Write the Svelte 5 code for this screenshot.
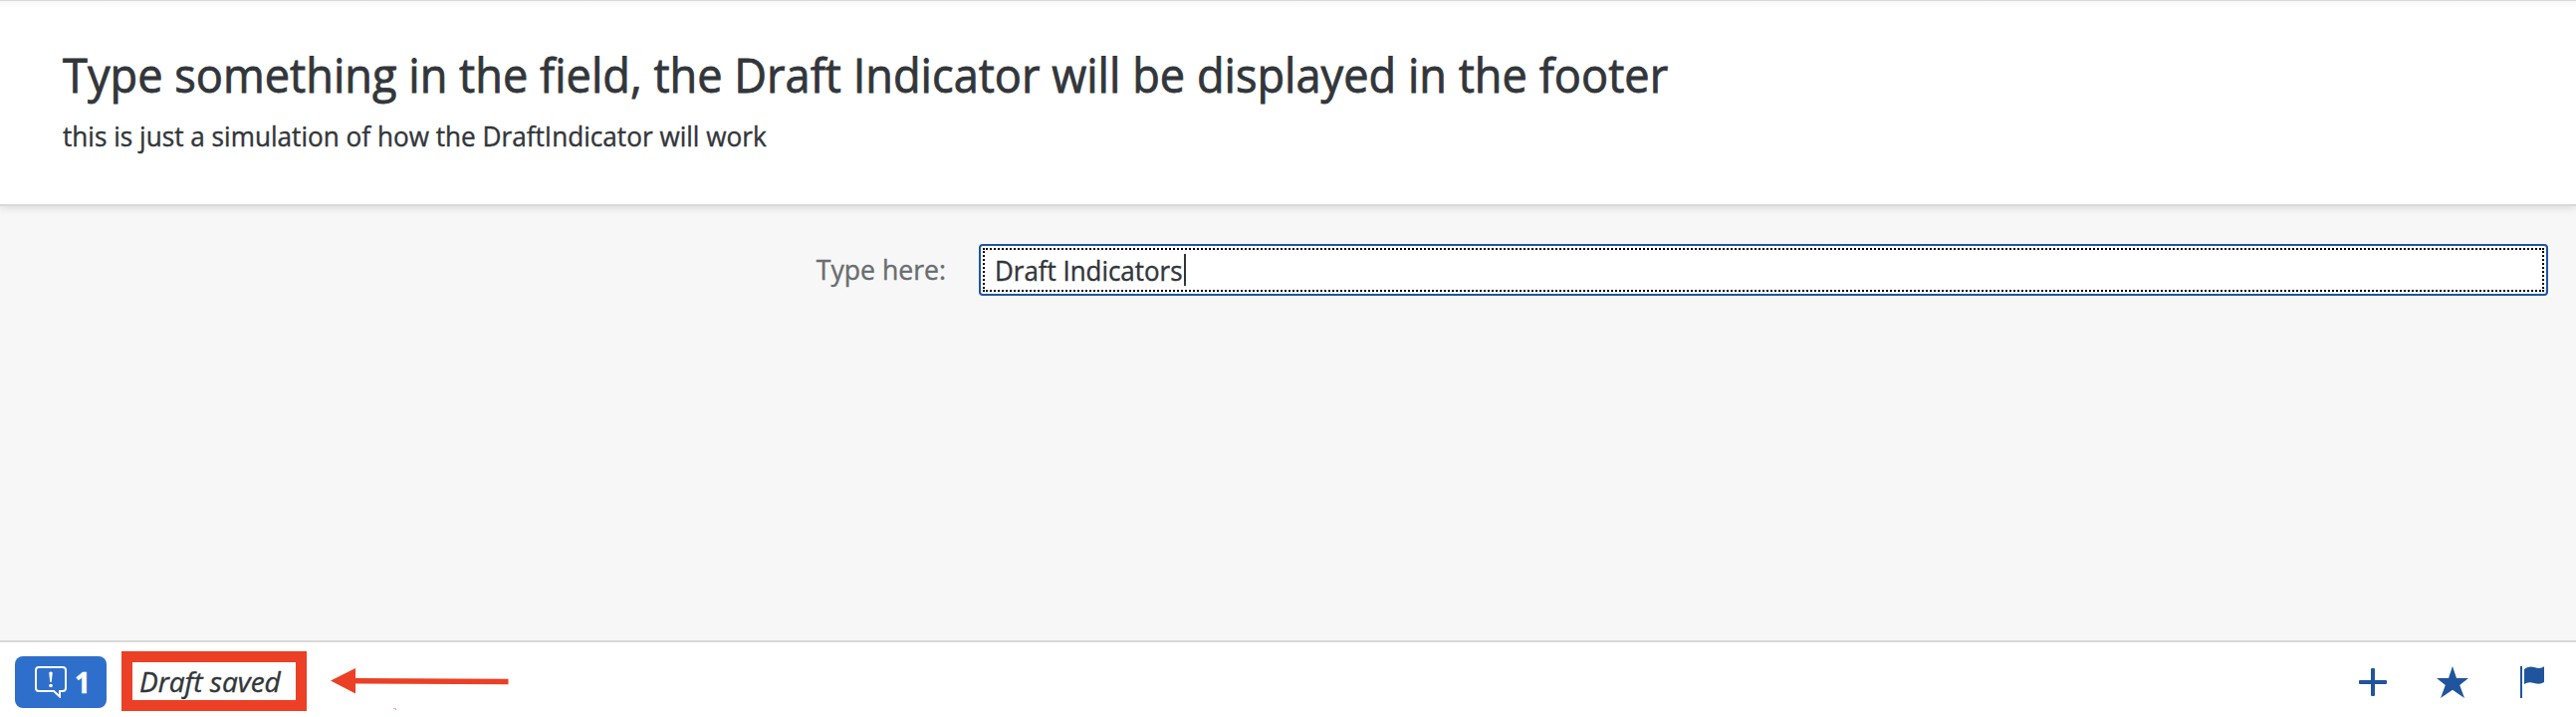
<script>
  let value = 'Draft Indicators';
</script>

<div class="page">
  <header>
    <h1><span>Type something in the field, the Draft Indicator will be displayed in the footer</span></h1>
    <p><span>this is just a simulation of how the DraftIndicator will work</span></p>
  </header>
  <main>
    <div class="label"><span>Type here:</span></div>
    <div class="field"><div class="focus"><div class="entry"><span class="value">{value}</span></div><i class="caret"></i></div></div>
  </main>
  <footer>
    <div class="messages">
      <svg width="32" height="32" viewBox="0 0 32 32" fill="none" stroke="#fff" stroke-width="2">
        <path d="M4 1H28Q31 1 31 4V22Q31 25 28 25H25V30.5L19 25H4Q1 25 1 22V4Q1 1 4 1Z" />
        <path d="M14.2 6.5Q16 4.5 17.8 6.5L16.7 16H15.3Z" fill="#fff" stroke="none" />
        <circle cx="16" cy="19.5" r="1.8" fill="#fff" stroke="none" />
      </svg>
      <b>1</b>
    </div>
    <div class="draft"><span>Draft saved</span></div>
    <svg class="arrow" width="180" height="50" viewBox="0 0 180 50" fill="#eb4026">
      <path d="M0 19.6L25 7V17L178.5 17.8V23.3L25 22.5V32.5Z" />
      <path d="M63 47.2H66V49H65V48H63Z" opacity=".5" />
    </svg>
    <div class="actions">
      <svg width="32" height="32" viewBox="0 0 32 32"><path d="M15 2H17Q18 2 18 3V14H29Q30 14 30 15V17Q30 18 29 18H18V29Q18 30 17 30H15Q14 30 14 29V18H3Q2 18 2 17V15Q2 14 3 14H14V3Q14 2 15 2Z" /></svg>
      <svg width="32" height="32" viewBox="0 0 32 32"><path d="M16 0L20 12H32L23.2 19L28 32L16 23.8L4 32L8.8 19L0 12H12Z" /></svg>
      <svg width="32" height="32" viewBox="0 0 32 32"><path d="M4 0H6V32H4ZM8 3Q12-.7 18 1Q24 3.5 28 .3V16Q24 19 18 17Q12 15 8 18Z" /></svg>
    </div>
  </footer>
</div>

<style>
  :global(body) { margin: 0; }
  * { box-sizing: border-box; }
  .page {
    width: 2587px;
    height: 720px;
    display: flex;
    flex-direction: column;
    overflow: hidden;
    background: #f7f7f7;
    color: #32363a;
    font: 28px/40px "Open Sans", sans-serif;
    -webkit-text-stroke: .4px currentColor;
  }
  span, b { white-space: nowrap; }
  span { display: inline-block; transform-origin: 0 50%; }
  header {
    height: 207px;
    padding: 41px 63px 0;
    background: linear-gradient(#f8f8f8, #fff 8px);
    border-top: 1px solid #d9d9d9;
    border-bottom: 2px solid #d9d9d9;
    box-shadow: 0 2px 8px rgba(0, 0, 0, .12);
  }
  h1 {
    margin: 0;
    font-size: 47px;
    font-weight: 400;
    line-height: 66px;
    -webkit-text-stroke-width: .8px;
  }
  h1 span { transform: scaleX(.961); }
  p { margin: 8px 0 0; }
  p span { transform: scaleX(.934); }
  main {
    flex: 1;
    display: flex;
    align-items: flex-start;
    padding: 38px 28px 0 0;
  }
  .label {
    width: 983px;
    padding: 5px 33px 0 0;
    text-align: right;
    color: #6a6d70;
  }
  .label span { transform: scaleX(.95); transform-origin: 100% 50%; }
  .field {
    flex: 1;
    height: 52px;
    padding: 2px;
    border: 2px solid #20559d;
    border-radius: 4px;
    background: #fff;
  }
  .focus {
    height: 44px;
    display: flex;
    align-items: center;
    padding-left: 10px;
    border: 2px dotted #000;
  }
  .entry { width: 190px; padding-bottom: 1px; }
  .value { transform: scaleX(.925); }
  .caret { width: 2px; height: 32px; background: #32363a; }
  footer {
    height: 77px;
    display: flex;
    align-items: flex-start;
    padding: 9px 24px 0 15px;
    border-top: 2px solid #d9d9d9;
    background: #fff;
  }
  .messages {
    width: 92px;
    height: 52px;
    margin-top: 5px;
    padding: 10px 0 0 20px;
    display: flex;
    gap: 8px;
    border-radius: 8px;
    background: #2f6fcc;
    color: #fff;
  }
  .messages b { line-height: 32px; }
  .draft {
    width: 186px;
    height: 60px;
    margin-left: 15px;
    padding-left: 7px;
    border: 11.5px solid #eb4026;
    font-style: italic;
    line-height: 38px;
  }
  .arrow { margin-left: 24px; margin-top: 10px; }
  .actions {
    margin: 15px 4px 0 auto;
    display: flex;
    gap: 48px;
    fill: #20559d;
  }
</style>
